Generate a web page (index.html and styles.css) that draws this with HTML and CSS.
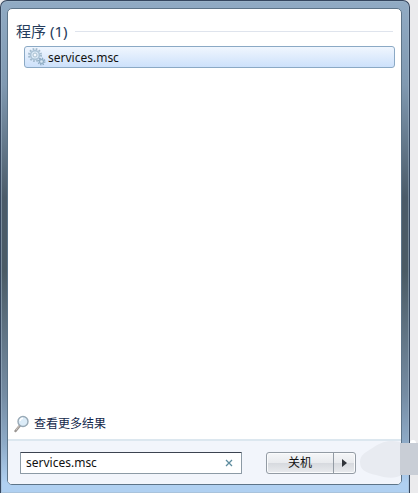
FILE: index.html
```
<!DOCTYPE html>
<html lang="zh-CN">

<head>
    <meta charset="UTF-8">
    <meta name="viewport" content="width=device-width, initial-scale=1.0">
    <title>services.msc</title>
    <link rel="stylesheet" href="styles.css">
</head>

<body>
    <div class="frame">
        <main class="panel">
            <section class="results">
                <h1 class="group-title">程序 (1)</h1>
                <a href="#" class="result">
                    <svg class="gears" width="18" height="18" viewBox="0 0 18 18" fill="none">
                        <circle cx="7" cy="7" r="6" stroke="#a3bbce" stroke-width="2" stroke-dasharray="1.7 1.44"/>
                        <circle cx="7" cy="7" r="4.4" fill="#dcebf7" stroke="#abc3d6" stroke-width="1.6"/>
                        <circle cx="7" cy="7" r="2" fill="#f4f9fe" stroke="#a9bfd0"/>
                        <circle cx="13.5" cy="13.5" r="3.2" stroke="#8facc4" stroke-width="1.6" stroke-dasharray="1.3 1.21"/>
                        <circle cx="13.5" cy="13.5" r="2" fill="#dcebf7" stroke="#94b1c8" stroke-width="1.3"/>
                    </svg>
                    <span>services.msc</span>
                </a>
            </section>
            <a href="#" class="more">
                <svg width="16" height="18" viewBox="0 0 16 18">
                    <path d="M6 10.5L1.5 16" stroke="#9b9693" stroke-width="2.4" stroke-linecap="round"/>
                    <path d="M5.5 10.5L2 15" stroke="#cfc7c0" stroke-width="1"/>
                    <circle cx="9" cy="6.5" r="5" fill="#dcecf8" stroke="#98a9b6" stroke-width="1.4"/>
                    <path d="M6 6a3.2 3.2 0 0 1 3-2.8" fill="none" stroke="#fff" stroke-width="1.4"/>
                </svg>
                <span>查看更多结果</span>
            </a>
            <form class="footer">
                <div class="search">
                    <input type="text" class="search-text" value="services.msc" aria-label="搜索程序和文件">
                    <button type="button" class="clear" aria-label="清除">
                        <svg width="8" height="8" viewBox="0 0 8 8">
                            <path d="M1 1l6 6M7 1L1 7" stroke="#5d8c9e" stroke-width="1.3"/>
                        </svg>
                    </button>
                </div>
                <div class="power">
                    <button type="button" class="shutdown">关机</button>
                    <button type="button" class="arrow" aria-label="其他选项">
                        <svg width="5" height="8" viewBox="0 0 5 8">
                            <path d="M0 0l5 4-5 4z" fill="#30343a"/>
                        </svg>
                    </button>
                </div>
            </form>
        </main>
    </div>
    <svg class="cloud" width="60" height="40" viewBox="0 0 60 40">
        <path d="M2 22C2 14 10 11 16 7C26 0 38 0 43 3H60V35H43C38 39 27 38 18 35C8 33 2 30 2 22Z" fill="#e8ebf1"/>
        <path d="M42 3H60V35H42Z" fill="#c9ced6"/>
        <path d="M52 3A3 3 0 0 1 58 3Z" fill="#fff"/>
    </svg>
</body>

</html>
```

FILE: styles.css
```
* {
    box-sizing: border-box;
}

body {
    display: flex;
    min-height: 100vh;
    margin: 0;
    padding-right: 8px;
    background-color: #ebebed;
    font-family: "Noto Sans", "Noto Sans CJK SC", sans-serif;
    font-size: 12px;
    color: #111;
}

a {
    color: inherit;
    text-decoration: none;
}

button,
input {
    margin: 0;
    padding: 0;
    border: 0;
    background: none;
    font: inherit;
    color: inherit;
}

.frame {
    display: flex;
    flex: 1;
    padding: 7px 7px 8px 6px;
    border: 1px solid #36475f;
    border-bottom: 0;
    border-radius: 7px 7px 0 0;
    background: linear-gradient(#91abc4, #8099b1 17%, #4b5b69 40%, #4b5b65 55%, #758ca3 80%, #8eabc8 90%, #b0d0f1 98%);
    box-shadow: inset 0 0 0 1px #a3b8cb88;
}

.panel {
    display: flex;
    flex: 1;
    flex-direction: column;
    border: 1px solid #5d7488;
    border-radius: 5px;
    background-color: #fff;
    overflow: hidden;
}

.results {
    flex: 1;
    padding: 11px 6px 0 8px;
}

.group-title {
    display: flex;
    align-items: center;
    gap: 8px;
    margin: 0 2px 4px 0;
    font-size: 15px;
    font-weight: normal;
    line-height: 22px;
    color: #263c5c;
}

.group-title::after {
    content: "";
    flex: 1;
    height: 1px;
    background-color: #dfe4ed;
}

.result {
    display: flex;
    align-items: center;
    gap: 2px;
    height: 22px;
    margin-left: 8px;
    padding-left: 3px;
    border: 1px solid #8ba9c5;
    border-radius: 3px;
    background: linear-gradient(#f0f6fe, #cde1fb);
    font-size: 12px;
}

.more {
    display: flex;
    align-items: center;
    gap: 4px;
    padding: 0 6px 6px;
    line-height: 18px;
    color: #14284b;
}

.footer {
    display: flex;
    align-items: center;
    gap: 24px;
    height: 45px;
    padding: 0 45px 0 12px;
    border-top: 2px solid #dce7ef;
    background-color: #f2f5fb;
}

.search {
    display: flex;
    flex: 1;
    height: 22px;
    border: 1px solid #8c9aa5;
    border-top-color: #3c4350;
    border-radius: 1px;
    background-color: #fff;
}

.search-text {
    flex: 1;
    min-width: 0;
    padding-left: 5px;
    outline: 0;
}

.clear {
    display: flex;
    align-items: center;
    justify-content: center;
    width: 24px;
}

.power {
    display: flex;
    height: 22px;
    border: 1px solid #939ba4;
    border-radius: 3px;
    background: linear-gradient(#f5f6f8, #e9ebee 48%, #d7dadf 52%, #e9ebee);
    box-shadow: inset 0 0 0 1px #fafbfc;
}

.shutdown {
    width: 66px;
    line-height: 20px;
}

.arrow {
    display: flex;
    align-items: center;
    justify-content: center;
    width: 22px;
    border-left: 1px solid #939ba4;
}

/* sits over the bottom right corner of the menu */
.cloud {
    position: absolute;
    right: 0;
    bottom: 13px;
}
```
